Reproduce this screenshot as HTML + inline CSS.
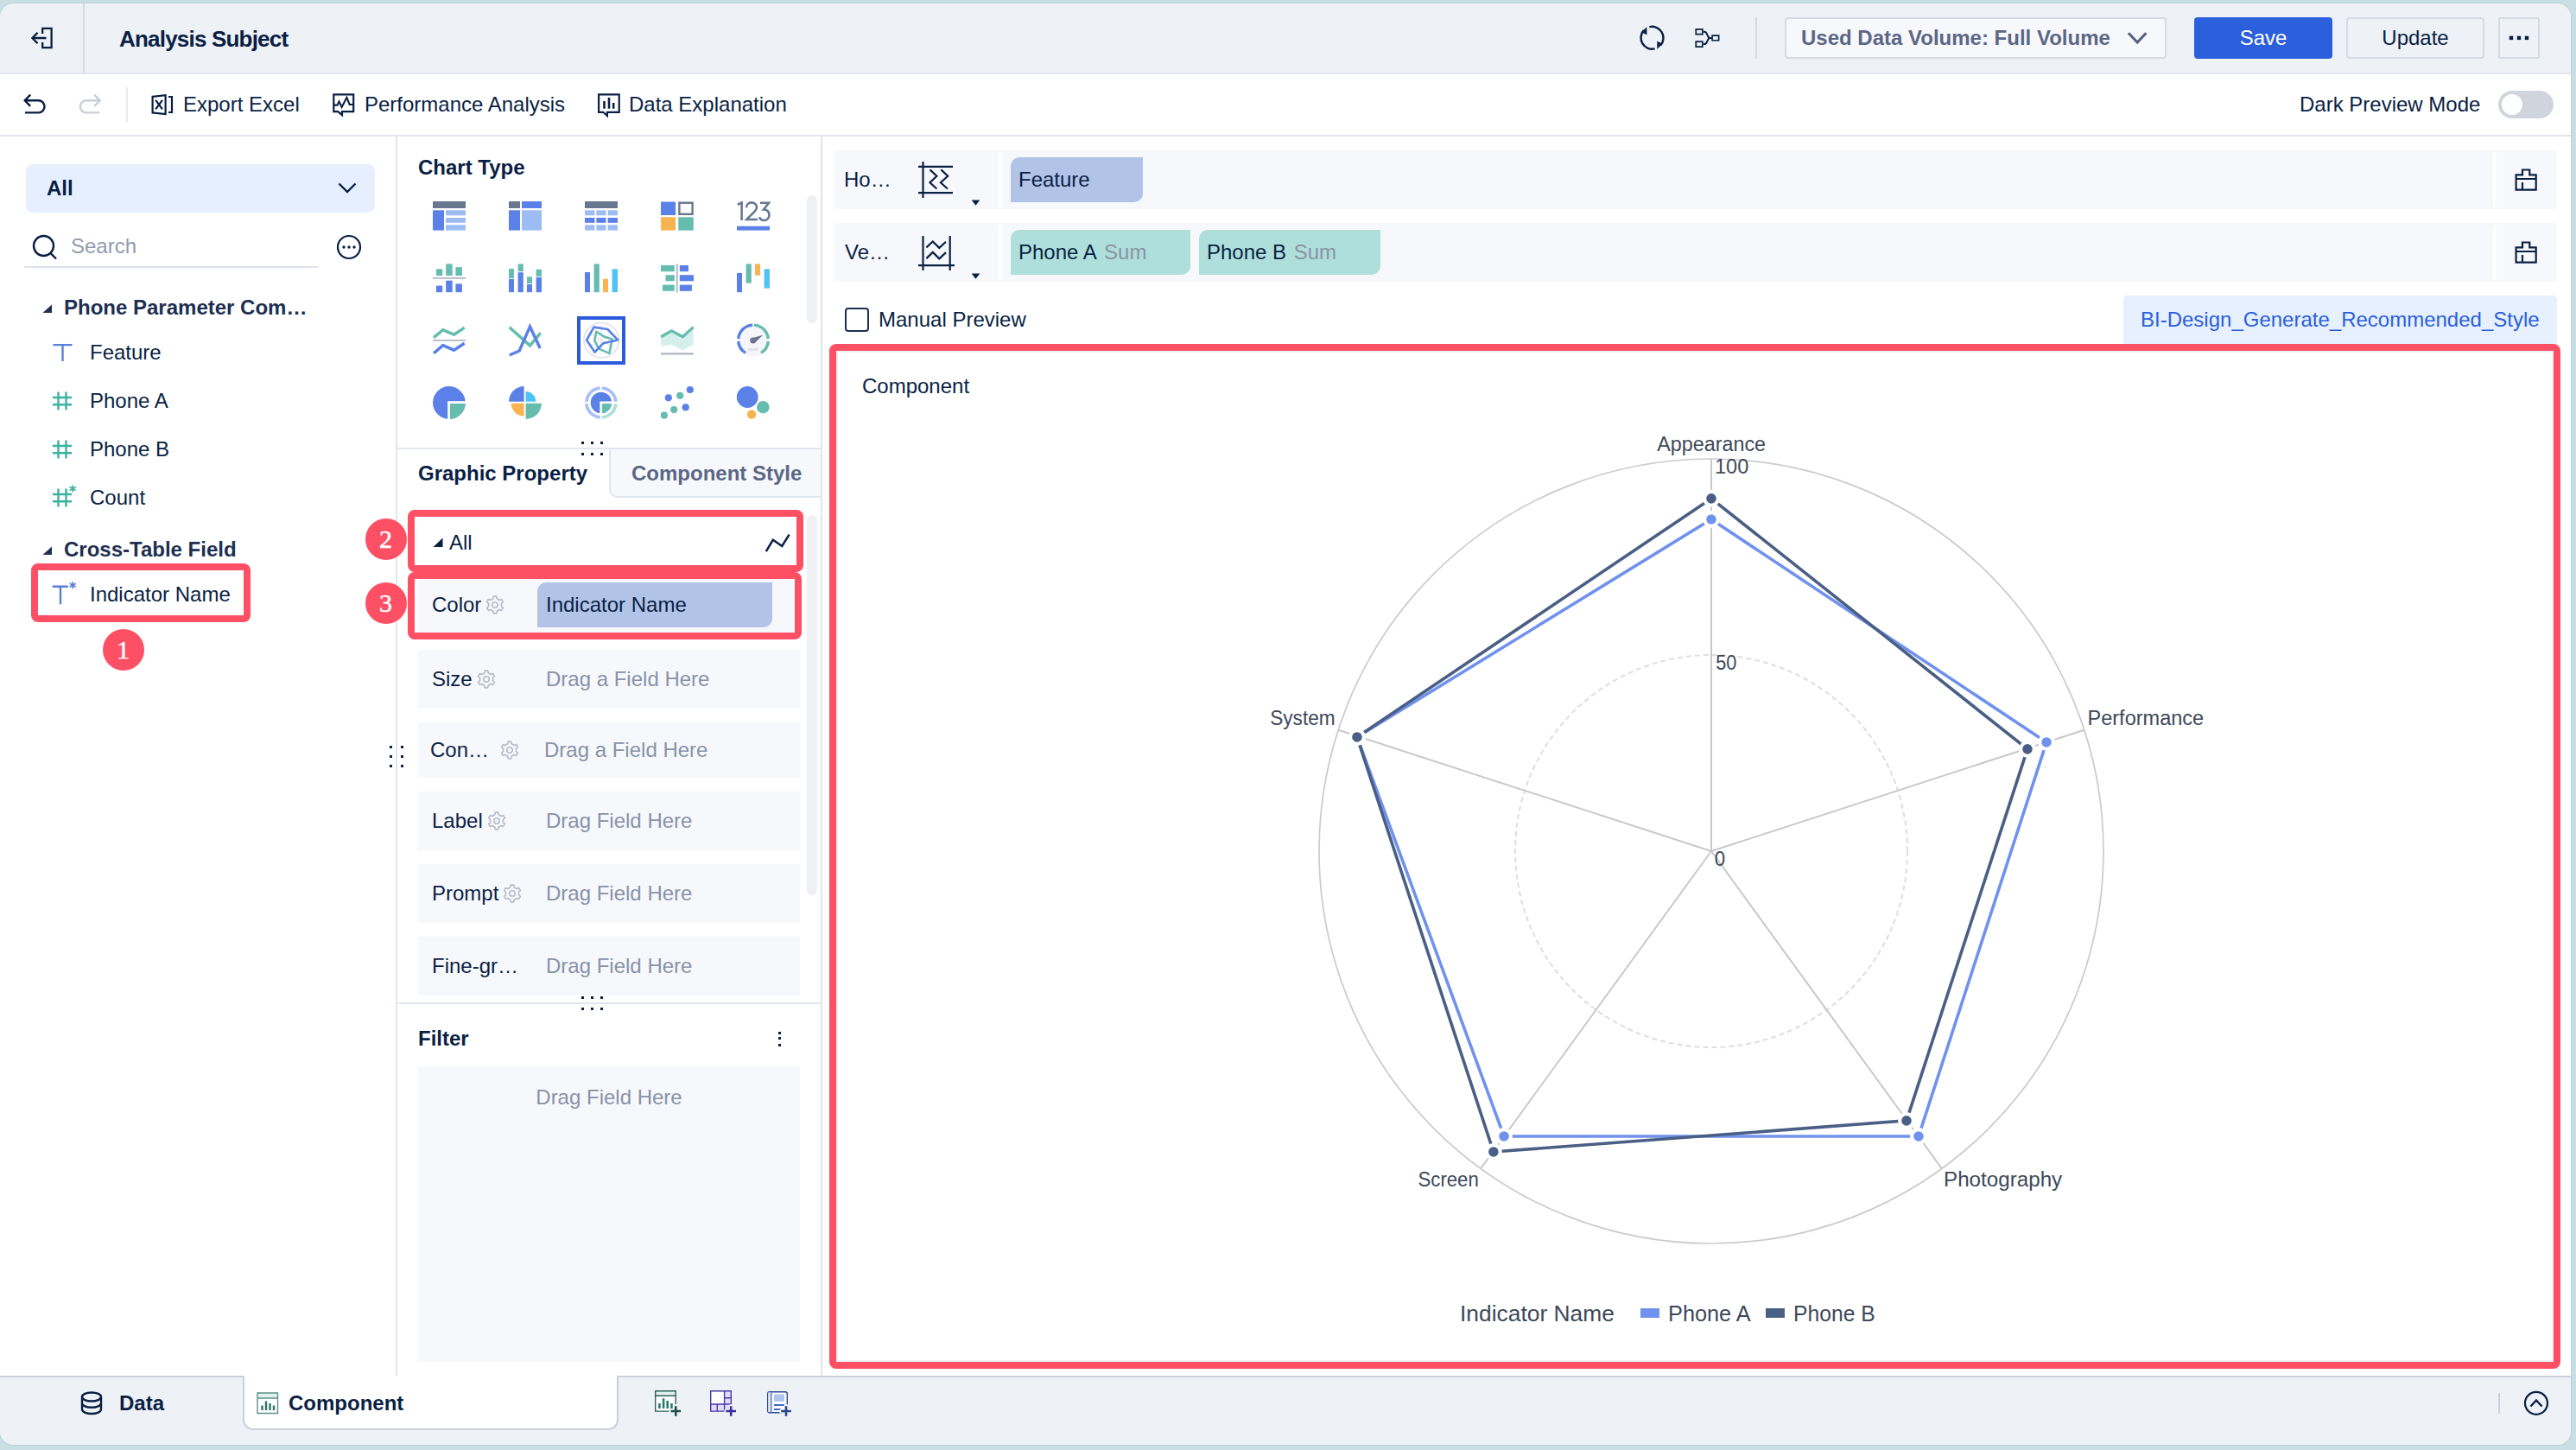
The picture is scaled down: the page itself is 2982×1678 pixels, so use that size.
<!DOCTYPE html>
<html>
<head>
<meta charset="utf-8">
<title>Analysis Subject</title>
<style>
*{box-sizing:border-box;margin:0;padding:0}
html,body{width:2982px;height:1678px;overflow:hidden}
body{background:#c8e0e4;font-family:"Liberation Sans",sans-serif;font-size:24px;color:#0a1f44;position:relative}
.a{position:absolute}
.t{position:absolute;white-space:nowrap;line-height:1}
.b{font-weight:bold}
#win{left:0;top:4px;width:2976px;height:1668px;background:#fff;border-radius:16px;overflow:hidden;box-shadow:0 0 2px 1px #b9d2d7}
#hdr{left:0;top:0;width:2976px;height:80px;background:#eef1f6}
.hl{background:#e1e5ed}
.vl{background:#e1e5ed}
.row{background:#f7f8fc}
.ph{color:#8792a8}
.red{border:8px solid #fe5065;border-radius:8px}
.badge{width:48px;height:48px;border-radius:24px;background:#fe5065;color:#fff;font-family:"Liberation Serif",serif;font-size:30px;line-height:48px;text-align:center;-webkit-text-stroke:0.5px #fff}
.pillb{background:#b1c4e8;border-radius:10px 0 10px 0}
.pillg{background:#aedfdb;border-radius:10px 0 10px 0}
.btn{border:2px solid #d6dae3;border-radius:4px;background:#f7f8fc}
svg{position:absolute;overflow:visible}
</style>
</head>
<body>
<div id="win" class="a">

<!-- ===== header ===== -->
<div id="hdr" class="a"></div>
<div class="a hl" style="left:0;top:80px;width:2976px;height:2px"></div>
<div class="a" style="left:96px;top:0;width:2px;height:80px;background:#d5d9e2"></div>
<div class="t b" style="left:138px;top:28px;font-size:26px;letter-spacing:-0.8px">Analysis Subject</div>

<div class="a" style="left:2032px;top:16px;width:2px;height:48px;background:#d5d9e2"></div>
<div class="a btn" style="left:2066px;top:16px;width:442px;height:48px"></div>
<div class="t b" style="left:2085px;top:28px;color:#5a6785">Used Data Volume: Full Volume</div>
<div class="a" style="left:2540px;top:16px;width:160px;height:48px;background:#2c5fdb;border-radius:4px"></div>
<div class="t" style="left:2540px;width:160px;text-align:center;top:28px;color:#fff">Save</div>
<div class="a btn" style="left:2716px;top:16px;width:160px;height:48px;background:#eef1f6"></div>
<div class="t" style="left:2716px;width:160px;text-align:center;top:28px">Update</div>
<div class="a btn" style="left:2892px;top:16px;width:48px;height:48px;background:#eef1f6;border-radius:2px"></div>

<!-- ===== toolbar ===== -->
<div class="a hl" style="left:0;top:152px;width:2976px;height:2px"></div>
<div class="a" style="left:146px;top:97px;width:2px;height:40px;background:#e6e9f0"></div>
<div class="t" style="left:212px;top:105px">Export Excel</div>
<div class="t" style="left:422px;top:105px">Performance Analysis</div>
<div class="t" style="left:728px;top:105px">Data Explanation</div>
<div class="t" style="left:2662px;top:105px">Dark Preview Mode</div>
<div class="a" style="left:2892px;top:101px;width:64px;height:32px;border-radius:16px;background:#d0d4dd"></div>
<div class="a" style="left:2896px;top:105px;width:24px;height:24px;border-radius:12px;background:#fff"></div>

<!-- ===== panel dividers ===== -->
<div class="a vl" style="left:458px;top:154px;width:2px;height:1434px"></div>
<div class="a vl" style="left:950px;top:154px;width:2px;height:1434px"></div>


<!-- ===== LEFT PANEL ===== -->
<div class="a" style="left:30px;top:186px;width:404px;height:56px;background:#e6efff;border-radius:8px"></div>
<div class="t b" style="left:54px;top:202px">All</div>
<svg style="left:390px;top:205.4px" width="24" height="16" viewBox="0 0 24 16"><path d="M2.5 3.5 L12 13 L21.5 3.5" fill="none" stroke="#0a1f44" stroke-width="2.4"/></svg>
<svg style="left:34px;top:264.6px" width="36" height="36" viewBox="0 0 36 36"><circle cx="16.5" cy="15.5" r="11.5" fill="none" stroke="#0a1f44" stroke-width="2.4"/><path d="M24.5 24 L31 30.5" stroke="#0a1f44" stroke-width="2.4"/></svg>
<div class="t" style="left:82px;top:269px;color:#919cb0">Search</div>
<div class="a" style="left:28px;top:304px;width:340px;height:2px;background:#dde1ea"></div>
<svg style="left:388px;top:266px" width="32" height="32" viewBox="0 0 32 32"><circle cx="16" cy="16" r="13" fill="none" stroke="#0a1f44" stroke-width="2.2"/><circle cx="10" cy="16" r="1.7" fill="#0a1f44"/><circle cx="16" cy="16" r="1.7" fill="#0a1f44"/><circle cx="22" cy="16" r="1.7" fill="#0a1f44"/></svg>

<svg style="left:49px;top:348px" width="12" height="10" viewBox="0 0 12 10"><path d="M0.5 10 L11 10 L11 0.5 Z" fill="#1d2f52"/></svg>
<div class="t b" style="left:74px;top:340px;color:#1d2f52">Phone Parameter Com…</div>

<svg style="left:60px;top:392px" width="26" height="24" viewBox="0 0 26 24"><path d="M1.5 3.1 H23.5 M12.5 3.1 V22" fill="none" stroke="#5a7fd6" stroke-width="2.4"/></svg>
<div class="t" style="left:104px;top:392px">Feature</div>
<svg style="left:60px;top:448px" width="26" height="24" viewBox="0 0 26 24"><path d="M1 8 H23 M1 16.2 H23 M7.5 1.5 V22.5 M16.5 1.5 V22.5" fill="none" stroke="#3bb3a0" stroke-width="2.4"/></svg>
<div class="t" style="left:104px;top:448px">Phone A</div>
<svg style="left:60px;top:504px" width="26" height="24" viewBox="0 0 26 24"><path d="M1 8 H23 M1 16.2 H23 M7.5 1.5 V22.5 M16.5 1.5 V22.5" fill="none" stroke="#3bb3a0" stroke-width="2.4"/></svg>
<div class="t" style="left:104px;top:504px">Phone B</div>
<svg style="left:60px;top:560px" width="30" height="28" viewBox="0 0 30 28"><path d="M1 8 H23 M1 16.2 H23 M7.5 1.5 V22.5 M16.5 1.5 V22.5" fill="none" stroke="#3bb3a0" stroke-width="2.4"/><circle cx="24.2" cy="1.5" r="5.6" fill="#fff"/><path d="M24.2 -2.5 V5.5 M20.7 -0.5 L27.7 3.5 M27.7 -0.5 L20.7 3.5" stroke="#3bb3a0" stroke-width="1.7"/></svg>
<div class="t" style="left:104px;top:560px">Count</div>

<svg style="left:49px;top:628px" width="12" height="10" viewBox="0 0 12 10"><path d="M0.5 10 L11 10 L11 0.5 Z" fill="#1d2f52"/></svg>
<div class="t b" style="left:74px;top:620px;color:#1d2f52">Cross-Table Field</div>
<svg style="left:60px;top:668px" width="30" height="28" viewBox="0 0 30 28"><path d="M0.8 6.7 H18.8 M10 6.7 V27.2" fill="none" stroke="#5a7fd6" stroke-width="2.4"/><path d="M24.2 1.3 V9.3 M20.7 3.3 L27.7 7.3 M27.7 3.3 L20.7 7.3" stroke="#5a7fd6" stroke-width="1.7"/></svg>
<div class="t" style="left:104px;top:672px">Indicator Name</div>
<div class="a red" style="left:36px;top:648px;width:254px;height:68px"></div>
<div class="a badge" style="left:118.5px;top:724.3px">1</div>


<!-- ===== MIDDLE PANEL ===== -->
<div class="t b" style="left:484px;top:178px">Chart Type</div>
<svg style="left:501px;top:227px" width="38" height="38" viewBox="0 0 38 38"><rect x="0.0" y="2.0" width="38.0" height="8.0" fill="#68768f"/><rect x="0.0" y="12.3" width="13.0" height="23.3" fill="#5b81e8"/><rect x="15.0" y="12.3" width="23.0" height="6.0" fill="#9dbcf4"/><rect x="15.0" y="21.0" width="23.0" height="5.8" fill="#9dbcf4"/><rect x="15.0" y="29.3" width="23.0" height="6.3" fill="#9dbcf4"/></svg>
<svg style="left:589px;top:227px" width="38" height="38" viewBox="0 0 38 38"><rect x="0.0" y="2.0" width="13.0" height="8.0" fill="#68768f"/><rect x="15.0" y="2.0" width="23.0" height="8.0" fill="#5b81e8"/><rect x="0.0" y="12.3" width="13.0" height="23.3" fill="#5b81e8"/><rect x="15.0" y="12.3" width="23.0" height="23.3" fill="#9dbcf4"/></svg>
<svg style="left:677px;top:227px" width="38" height="38" viewBox="0 0 38 38"><rect x="0.0" y="2.0" width="38.0" height="8.0" fill="#68768f"/><rect x="0.0" y="12.3" width="11.4" height="6.0" fill="#9dbcf4"/><rect x="0.0" y="21.0" width="11.4" height="5.8" fill="#5b81e8"/><rect x="0.0" y="29.3" width="11.4" height="6.3" fill="#9dbcf4"/><rect x="13.4" y="12.3" width="11.1" height="6.0" fill="#9dbcf4"/><rect x="13.4" y="21.0" width="11.1" height="5.8" fill="#5b81e8"/><rect x="13.4" y="29.3" width="11.1" height="6.3" fill="#9dbcf4"/><rect x="26.6" y="12.3" width="11.4" height="6.0" fill="#9dbcf4"/><rect x="26.6" y="21.0" width="11.4" height="5.8" fill="#5b81e8"/><rect x="26.6" y="29.3" width="11.4" height="6.3" fill="#9dbcf4"/></svg>
<svg style="left:765px;top:227px" width="38" height="38" viewBox="0 0 38 38"><rect x="0.0" y="2.5" width="17.1" height="15.5" fill="#5b81e8"/><rect x="21.4" y="3.7" width="15.2" height="13.1" fill="#fff" stroke="#68768f" stroke-width="2.4"/><rect x="0.0" y="20.3" width="17.1" height="15.3" fill="#f9b350"/><rect x="20.2" y="20.3" width="17.6" height="15.3" fill="#65bdb0"/></svg>
<svg style="left:853px;top:227px" width="38" height="38" viewBox="0 0 38 38"><g fill="none" stroke="#68768f" stroke-width="2.6" stroke-linejoin="miter"><path d="M0.8 5.8 L5.6 3.6 V24"/><path d="M11 9.2 C11 1.5 23 1.5 23 9 C23 13.5 16 17.5 11.2 23 H24"/><path d="M27 3.8 H37 L31 11.5 C39.5 11 39.5 24 31.5 24 C28.5 24 26.7 22.3 26 20.3"/></g><rect x="0.0" y="30.7" width="38.0" height="4.9" fill="#5b81e8"/></svg>
<svg style="left:501px;top:299px" width="38" height="38" viewBox="0 0 38 38"><rect x="4.0" y="8.3" width="7.2" height="7.7" fill="#65bdb0"/><rect x="15.2" y="2.4" width="7.5" height="13.6" fill="#65bdb0"/><rect x="26.4" y="6.2" width="7.5" height="9.8" fill="#65bdb0"/><rect x="0.0" y="18.1" width="38.0" height="1.6" fill="#a9b1c4"/><rect x="4.0" y="27.6" width="7.2" height="7.6" fill="#5b81e8"/><rect x="15.2" y="21.7" width="7.5" height="13.5" fill="#5b81e8"/><rect x="26.4" y="25.4" width="7.5" height="9.8" fill="#5b81e8"/></svg>
<svg style="left:589px;top:299px" width="38" height="38" viewBox="0 0 38 38"><rect x="0.0" y="8.0" width="6.0" height="11.2" fill="#65bdb0"/><rect x="0.0" y="20.0" width="6.0" height="15.2" fill="#5b81e8"/><rect x="10.6" y="2.4" width="6.2" height="8.8" fill="#65bdb0"/><rect x="10.6" y="12.2" width="6.2" height="23.0" fill="#5b81e8"/><rect x="21.0" y="17.3" width="6.0" height="7.7" fill="#65bdb0"/><rect x="21.0" y="26.0" width="6.0" height="9.2" fill="#5b81e8"/><rect x="31.6" y="8.8" width="6.4" height="8.0" fill="#65bdb0"/><rect x="31.6" y="17.8" width="6.4" height="17.4" fill="#5b81e8"/></svg>
<svg style="left:677px;top:299px" width="38" height="38" viewBox="0 0 38 38"><rect x="0.0" y="12.0" width="6.0" height="23.2" fill="#5b81e8"/><rect x="10.6" y="2.4" width="6.2" height="32.8" fill="#65bdb0"/><rect x="21.0" y="19.7" width="6.0" height="15.5" fill="#f9b350"/><rect x="31.6" y="8.3" width="6.4" height="26.9" fill="#4fc3f7"/></svg>
<svg style="left:765px;top:299px" width="38" height="38" viewBox="0 0 38 38"><rect x="17.9" y="2.4" width="1.7" height="33.2" fill="#a9b1c4"/><rect x="0.0" y="4.0" width="15.8" height="7.2" fill="#65bdb0"/><rect x="5.5" y="15.2" width="10.3" height="7.1" fill="#65bdb0"/><rect x="2.0" y="26.6" width="13.8" height="7.2" fill="#65bdb0"/><rect x="21.8" y="4.0" width="10.2" height="7.2" fill="#5b81e8"/><rect x="21.8" y="15.2" width="16.2" height="7.1" fill="#5b81e8"/><rect x="21.8" y="26.6" width="14.1" height="7.2" fill="#5b81e8"/></svg>
<svg style="left:853px;top:299px" width="38" height="38" viewBox="0 0 38 38"><rect x="0.0" y="12.9" width="6.0" height="22.3" fill="#5b81e8"/><rect x="10.6" y="2.4" width="6.2" height="22.2" fill="#65bdb0"/><rect x="21.0" y="2.4" width="6.0" height="13.3" fill="#f9b350"/><rect x="31.6" y="8.3" width="6.4" height="22.4" fill="#4fc3f7"/></svg>
<svg style="left:501px;top:371px" width="38" height="38" viewBox="0 0 38 38"><path d="M1.1 15.7 L11.7 6.7 L24.5 12.2 L36.7 4.1" fill="none" stroke="#65bdb0" stroke-width="3.5" /><rect x="0.0" y="18.1" width="38.0" height="1.6" fill="#a9b1c4"/><path d="M1.1 33.9 L11.7 24.6 L24.5 30.2 L36.7 22.2" fill="none" stroke="#5b81e8" stroke-width="3.5" /></svg>
<svg style="left:589px;top:371px" width="38" height="38" viewBox="0 0 38 38"><path d="M0.7 3.7 L24.5 24.9 L36.7 10.3" fill="none" stroke="#65bdb0" stroke-width="3.5" /><path d="M0.8 36.0 L12.2 31.0 L24.5 2.9 L36.2 27.9" fill="none" stroke="#5b81e8" stroke-width="3.5" /></svg>
<svg style="left:677px;top:371px" width="38" height="38" viewBox="0 0 38 38"><circle cx="19.2" cy="18.8" r="20.2" fill="none" stroke="#dde0e7" stroke-width="1.5"/><path d="M19.2 18.8 L19.2 2 M19.2 18.8 L33 10.5 M19.2 18.8 L33 27 M19.2 18.8 L19.2 35.5 M19.2 18.8 L5 27 M19.2 18.8 L5 10.5" stroke="#e6e8ed" stroke-width="1.1"/><path d="M13.3 8.8 L22.2 14.4 L32.0 17.8 L30.6 22.3 L28.5 33.9 L16.1 28.6 L11.3 19.0 Z" fill="none" stroke="#65bdb0" stroke-width="2.6" stroke-linejoin="round"/><path d="M2.1 18.5 L10.5 3.6 L26.4 6.0 L38.2 18.4 L21.2 22.3 L11.5 32.5 Z" fill="none" stroke="#5b81e8" stroke-width="2.6" stroke-linejoin="round"/></svg>
<svg style="left:765px;top:371px" width="38" height="38" viewBox="0 0 38 38"><path d="M0.1 14.8 L12.4 7.8 L25.3 14.8 L37.6 3.6 L37.6 23.7 L25.3 30.2 L12.4 24.1 L0.1 25.5 Z" fill="#d5f0ea"/><path d="M0.1 14.8 L12.4 7.8 L25.3 14.8 L37.6 3.6" fill="none" stroke="#65bdb0" stroke-width="3.3" stroke-linejoin="miter"/><rect x="0" y="33.4" width="37.6" height="2" fill="#a5acbb"/></svg>
<svg style="left:853px;top:371px" width="38" height="38" viewBox="0 0 38 38"><circle cx="19" cy="18.5" r="19.1" fill="#f5f6f9"/><path d="M10.04 33.41 A17.40 17.40 0 0 1 1.67 20.02" fill="none" stroke="#5b81e8" stroke-width="3.4"/><path d="M1.67 16.98 A17.40 17.40 0 0 1 18.09 1.12" fill="none" stroke="#5b81e8" stroke-width="3.4"/><path d="M19.91 1.12 A17.40 17.40 0 0 1 36.33 16.98" fill="none" stroke="#65bdb0" stroke-width="3.4"/><path d="M36.33 20.02 A17.40 17.40 0 0 1 27.96 33.41" fill="none" stroke="#65bdb0" stroke-width="3.4"/><rect x="13" y="28" width="12" height="2.9" rx="1.45" fill="#dfe3e8"/><circle cx="18.7" cy="19" r="3.5" fill="#68768f"/><path d="M16.6 16.4 L30.2 12.8 L20.8 21.8 Z" fill="#68768f"/></svg>
<svg style="left:501px;top:443px" width="38" height="38" viewBox="0 0 38 38"><circle cx="18.9" cy="19" r="18.9" fill="#5b81e8"/><path d="M18.9 37.9 V19 H37.8" fill="none" stroke="#fff" stroke-width="3.4"/><path d="M20 20.1 H37.8 A18.9 18.9 0 0 1 20 37.9 Z" fill="#65bdb0"/></svg>
<svg style="left:589px;top:443px" width="38" height="38" viewBox="0 0 38 38"><path d="M17.6 17.7 V0.1 A17.6 17.6 0 0 0 0 17.7 Z" fill="#5b81e8"/><path d="M19.6 17.7 V6 A11.7 11.7 0 0 1 31.3 17.7 Z" fill="#4fc3f7"/><path d="M19.6 19.7 H37.9 A18.3 18.3 0 0 1 19.6 38 Z" fill="#65bdb0"/><path d="M17.6 19.7 V34.5 A14.8 14.8 0 0 1 2.8 19.7 Z" fill="#f9b350"/></svg>
<svg style="left:677px;top:443px" width="38" height="38" viewBox="0 0 38 38"><path d="M20.09 2.04 A17.00 17.00 0 0 1 35.86 17.81" fill="none" stroke="#a9bff5" stroke-width="3.8"/><path d="M35.86 20.19 A17.00 17.00 0 0 1 20.09 35.96" fill="none" stroke="#b0e0d8" stroke-width="3.8"/><path d="M17.71 35.96 A17.00 17.00 0 0 1 1.94 20.19" fill="none" stroke="#a9bff5" stroke-width="3.8"/><path d="M1.94 17.81 A17.00 17.00 0 0 1 17.71 2.04" fill="none" stroke="#a9bff5" stroke-width="3.8"/><circle cx="18.9" cy="19" r="12.2" fill="#5b81e8"/><path d="M18.9 31.5 V19 H31.5" fill="none" stroke="#fff" stroke-width="3"/><path d="M20 20.1 H31.1 A12.2 12.2 0 0 1 20 31.2 Z" fill="#65bdb0"/></svg>
<svg style="left:765px;top:443px" width="38" height="38" viewBox="0 0 38 38"><circle cx="33.8" cy="4.0" r="4.1" fill="#5b81e8"/><circle cx="8.8" cy="13.3" r="4.1" fill="#5b81e8"/><circle cx="22.2" cy="10.8" r="4.1" fill="#65bdb0"/><circle cx="28.7" cy="24.4" r="4.1" fill="#5b81e8"/><circle cx="15.2" cy="27.1" r="4.1" fill="#65bdb0"/><circle cx="3.9" cy="33.7" r="4.1" fill="#65bdb0"/></svg>
<svg style="left:853px;top:443px" width="38" height="38" viewBox="0 0 38 38"><circle cx="12.2" cy="12.5" r="12.4" fill="#5b81e8"/><circle cx="30.3" cy="24.2" r="7.3" fill="#65bdb0"/><circle cx="17.1" cy="32.5" r="5.2" fill="#f9b350"/></svg>
<div class="a" style="left:668px;top:362px;width:56px;height:56px;border:4px solid #2b5adb"></div>
<div class="a" style="left:934px;top:222px;width:12px;height:148px;border-radius:6px;background:#eff0f4"></div>

<div class="a hl" style="left:460px;top:514px;width:490px;height:2px"></div>

<div class="a" style="left:705px;top:516px;width:245px;height:56px;background:#f7f8fc;border-left:2px solid #e1e5ed;border-bottom:2px solid #e1e5ed;border-bottom-left-radius:10px"></div>
<div class="t b" style="left:484px;top:532px">Graphic Property</div>
<div class="t b" style="left:731px;top:532px;color:#5a6785">Component Style</div>
<div class="a" style="left:934px;top:592px;width:12px;height:440px;border-radius:6px;background:#eff0f4"></div>
<svg style="left:501px;top:618px" width="12" height="11" viewBox="0 0 12 11"><path d="M0.5 11 L11.5 11 L11.5 0.5 Z" fill="#0a1f44"/></svg>
<div class="t" style="left:520px;top:612px">All</div>
<svg style="left:884px;top:612px" width="32" height="26" viewBox="0 0 32 26"><path d="M2.8 22.2 L10.8 8.8 L21.3 16 L29.6 2.7" fill="none" stroke="#0a1f44" stroke-width="2.5"/></svg>
<div class="a row" style="left:484px;top:664px;width:442px;height:68px"></div>
<div class="t" style="left:500px;top:684px">Color</div>
<svg style="left:561px;top:684px" width="24" height="24" viewBox="0 0 24 24"><path d="M9.78 4.73 L10.26 2.15 L13.74 2.15 L14.22 4.73 L17.18 6.44 L19.66 5.57 L21.40 8.58 L19.41 10.29 L19.41 13.71 L21.40 15.42 L19.66 18.43 L17.18 17.56 L14.22 19.27 L13.74 21.85 L10.26 21.85 L9.78 19.27 L6.82 17.56 L4.34 18.43 L2.60 15.42 L4.59 13.71 L4.59 10.29 L2.60 8.58 L4.34 5.57 L6.82 6.44 Z" fill="none" stroke="#b4bcc9" stroke-width="1.6" stroke-linejoin="round"/><circle cx="12" cy="12" r="3.2" fill="none" stroke="#b4bcc9" stroke-width="1.6"/></svg>
<div class="a pillb" style="left:622px;top:670px;width:272px;height:52px"></div>
<div class="t" style="left:632px;top:684px">Indicator Name</div>
<div class="a row" style="left:484px;top:748px;width:442px;height:68px"></div>
<div class="t" style="left:500px;top:770px">Size</div>
<svg style="left:551px;top:770px" width="24" height="24" viewBox="0 0 24 24"><path d="M9.78 4.73 L10.26 2.15 L13.74 2.15 L14.22 4.73 L17.18 6.44 L19.66 5.57 L21.40 8.58 L19.41 10.29 L19.41 13.71 L21.40 15.42 L19.66 18.43 L17.18 17.56 L14.22 19.27 L13.74 21.85 L10.26 21.85 L9.78 19.27 L6.82 17.56 L4.34 18.43 L2.60 15.42 L4.59 13.71 L4.59 10.29 L2.60 8.58 L4.34 5.57 L6.82 6.44 Z" fill="none" stroke="#b4bcc9" stroke-width="1.6" stroke-linejoin="round"/><circle cx="12" cy="12" r="3.2" fill="none" stroke="#b4bcc9" stroke-width="1.6"/></svg>
<div class="t ph" style="left:632px;top:770px">Drag a Field Here</div>
<div class="a row" style="left:484px;top:832px;width:442px;height:64px"></div>
<div class="t" style="left:498px;top:852px">Con…</div>
<svg style="left:578px;top:852px" width="24" height="24" viewBox="0 0 24 24"><path d="M9.78 4.73 L10.26 2.15 L13.74 2.15 L14.22 4.73 L17.18 6.44 L19.66 5.57 L21.40 8.58 L19.41 10.29 L19.41 13.71 L21.40 15.42 L19.66 18.43 L17.18 17.56 L14.22 19.27 L13.74 21.85 L10.26 21.85 L9.78 19.27 L6.82 17.56 L4.34 18.43 L2.60 15.42 L4.59 13.71 L4.59 10.29 L2.60 8.58 L4.34 5.57 L6.82 6.44 Z" fill="none" stroke="#b4bcc9" stroke-width="1.6" stroke-linejoin="round"/><circle cx="12" cy="12" r="3.2" fill="none" stroke="#b4bcc9" stroke-width="1.6"/></svg>
<div class="t ph" style="left:630px;top:852px">Drag a Field Here</div>
<div class="a row" style="left:484px;top:912px;width:442px;height:68px"></div>
<div class="t" style="left:500px;top:934px">Label</div>
<svg style="left:563px;top:934px" width="24" height="24" viewBox="0 0 24 24"><path d="M9.78 4.73 L10.26 2.15 L13.74 2.15 L14.22 4.73 L17.18 6.44 L19.66 5.57 L21.40 8.58 L19.41 10.29 L19.41 13.71 L21.40 15.42 L19.66 18.43 L17.18 17.56 L14.22 19.27 L13.74 21.85 L10.26 21.85 L9.78 19.27 L6.82 17.56 L4.34 18.43 L2.60 15.42 L4.59 13.71 L4.59 10.29 L2.60 8.58 L4.34 5.57 L6.82 6.44 Z" fill="none" stroke="#b4bcc9" stroke-width="1.6" stroke-linejoin="round"/><circle cx="12" cy="12" r="3.2" fill="none" stroke="#b4bcc9" stroke-width="1.6"/></svg>
<div class="t ph" style="left:632px;top:934px">Drag Field Here</div>
<div class="a row" style="left:484px;top:996px;width:442px;height:68px"></div>
<div class="t" style="left:500px;top:1018px">Prompt</div>
<svg style="left:581px;top:1018px" width="24" height="24" viewBox="0 0 24 24"><path d="M9.78 4.73 L10.26 2.15 L13.74 2.15 L14.22 4.73 L17.18 6.44 L19.66 5.57 L21.40 8.58 L19.41 10.29 L19.41 13.71 L21.40 15.42 L19.66 18.43 L17.18 17.56 L14.22 19.27 L13.74 21.85 L10.26 21.85 L9.78 19.27 L6.82 17.56 L4.34 18.43 L2.60 15.42 L4.59 13.71 L4.59 10.29 L2.60 8.58 L4.34 5.57 L6.82 6.44 Z" fill="none" stroke="#b4bcc9" stroke-width="1.6" stroke-linejoin="round"/><circle cx="12" cy="12" r="3.2" fill="none" stroke="#b4bcc9" stroke-width="1.6"/></svg>
<div class="t ph" style="left:632px;top:1018px">Drag Field Here</div>
<div class="a row" style="left:484px;top:1080px;width:442px;height:68px"></div>
<div class="t" style="left:500px;top:1102px">Fine-gr…</div>
<div class="t ph" style="left:632px;top:1102px">Drag Field Here</div>
<div class="a" style="left:480px;top:594px;width:442px;height:56px;background:transparent"></div>
<div class="a red" style="left:472px;top:586px;width:458px;height:72px"></div>
<div class="a red" style="left:472px;top:658px;width:456px;height:78px"></div>
<div class="a badge" style="left:422.5px;top:596.3px">2</div>
<div class="a badge" style="left:422.5px;top:670.3px">3</div>

<div class="a hl" style="left:460px;top:1156px;width:490px;height:2px"></div>

<div class="a" style="left:672.5px;top:507.0px;width:3px;height:3px;background:#0a1f44"></div><div class="a" style="left:683.5px;top:507.0px;width:3px;height:3px;background:#0a1f44"></div><div class="a" style="left:694.5px;top:507.0px;width:3px;height:3px;background:#0a1f44"></div><div class="a" style="left:672.5px;top:520.0px;width:3px;height:3px;background:#0a1f44"></div><div class="a" style="left:683.5px;top:520.0px;width:3px;height:3px;background:#0a1f44"></div><div class="a" style="left:694.5px;top:520.0px;width:3px;height:3px;background:#0a1f44"></div><div class="a" style="left:672.5px;top:1149.0px;width:3px;height:3px;background:#0a1f44"></div><div class="a" style="left:683.5px;top:1149.0px;width:3px;height:3px;background:#0a1f44"></div><div class="a" style="left:694.5px;top:1149.0px;width:3px;height:3px;background:#0a1f44"></div><div class="a" style="left:672.5px;top:1162.0px;width:3px;height:3px;background:#0a1f44"></div><div class="a" style="left:683.5px;top:1162.0px;width:3px;height:3px;background:#0a1f44"></div><div class="a" style="left:694.5px;top:1162.0px;width:3px;height:3px;background:#0a1f44"></div><div class="a" style="left:451.0px;top:858.5px;width:3px;height:3px;background:#0a1f44"></div><div class="a" style="left:464.0px;top:858.5px;width:3px;height:3px;background:#0a1f44"></div><div class="a" style="left:451.0px;top:869.5px;width:3px;height:3px;background:#0a1f44"></div><div class="a" style="left:464.0px;top:869.5px;width:3px;height:3px;background:#0a1f44"></div><div class="a" style="left:451.0px;top:880.5px;width:3px;height:3px;background:#0a1f44"></div><div class="a" style="left:464.0px;top:880.5px;width:3px;height:3px;background:#0a1f44"></div>
<div class="t b" style="left:484px;top:1186px">Filter</div>
<div class="a" style="left:901px;top:1190px;width:3px;height:3px;background:#0a1f44"></div><div class="a" style="left:901px;top:1196px;width:3px;height:3px;background:#0a1f44"></div><div class="a" style="left:901px;top:1204px;width:3px;height:3px;background:#0a1f44"></div>
<div class="a row" style="left:484px;top:1230px;width:442px;height:342px"></div>
<div class="t ph" style="left:484px;width:442px;text-align:center;top:1254px">Drag Field Here</div>


<!-- ===== RIGHT AREA ===== -->
<div class="a row" style="left:966px;top:170px;width:1994px;height:68px"></div>
<div class="a" style="left:1156px;top:172px;width:4px;height:64px;background:#fff"></div>
<div class="a" style="left:2886px;top:172px;width:4px;height:64px;background:#fff"></div>
<div class="t" style="left:977px;top:192px">Ho…</div>
<svg style="left:1124px;top:227px" width="11" height="7" viewBox="0 0 11 7"><path d="M0.7 0.4 H10.3 L5.5 6.8 Z" fill="#0a1f44"/></svg>
<svg style="left:0;top:0" width="2976" height="400" viewBox="0 0 2976 400"><path d="M2912.6 198.3 H2920 V192.5 H2928.3 V198.3 H2935.7 V215.7 H2912.6 Z M2912.6 203.0 H2935.7 M2920 207.0 V215.7" fill="none" stroke="#0a1f44" stroke-width="2.2"/></svg>
<div class="a row" style="left:966px;top:254px;width:1994px;height:68px"></div>
<div class="a" style="left:1156px;top:256px;width:4px;height:64px;background:#fff"></div>
<div class="a" style="left:2886px;top:256px;width:4px;height:64px;background:#fff"></div>
<div class="t" style="left:978px;top:276px">Ve…</div>
<svg style="left:1124px;top:312px" width="11" height="7" viewBox="0 0 11 7"><path d="M0.7 0.4 H10.3 L5.5 6.8 Z" fill="#0a1f44"/></svg>
<svg style="left:0;top:0" width="2976" height="400" viewBox="0 0 2976 400"><path d="M2912.6 282.3 H2920 V276.5 H2928.3 V282.3 H2935.7 V299.7 H2912.6 Z M2912.6 287.0 H2935.7 M2920 291.0 V299.7" fill="none" stroke="#0a1f44" stroke-width="2.2"/></svg>
<svg style="left:0;top:0" width="1200" height="330" viewBox="0 0 1200 330"><path d="M1068.5 183.0 L1068.5 225.0 M1063.0 188.8 L1103.0 188.8 M1063.0 219.2 L1103.0 219.2 M1076.5 192.4 L1084.4 199.8 L1076.5 207.3 L1084.4 214.5 M1089.4 192.4 L1097.2 199.8 L1088.9 207.3 L1096.9 214.5 M1068.5 269.1 L1068.5 308.9 M1099.7 269.1 L1099.7 308.9 M1063.0 303.1 L1105.0 303.1 M1072.4 282.4 L1079.8 275.5 L1087.3 282.9 L1095.0 275.8 M1072.4 295.1 L1079.8 287.9 L1087.3 295.4 L1095.0 288.1" fill="none" stroke="#0a1f44" stroke-width="2.2"/></svg>
<div class="a pillb" style="left:1170px;top:178px;width:153px;height:52px"></div>
<div class="t" style="left:1179px;top:192px">Feature</div>
<div class="a pillg" style="left:1170px;top:262px;width:208px;height:52px"></div>
<div class="t" style="left:1179px;top:276px">Phone A <span style="color:#8a93a6;margin-left:3px">Sum</span></div>
<div class="a pillg" style="left:1388px;top:262px;width:210px;height:52px"></div>
<div class="t" style="left:1397px;top:276px">Phone B <span style="color:#8a93a6;margin-left:2px">Sum</span></div>
<div class="a" style="left:978px;top:352px;width:28px;height:28px;border:2px solid #1d2f52;border-radius:4px;background:#fff"></div>
<div class="t" style="left:1017px;top:354px">Manual Preview</div>
<div class="a" style="left:2458px;top:338px;width:502px;height:59px;background:#e6f0ff;border-radius:4px 4px 0 4px"></div>
<div class="t" style="left:2478px;top:354px;color:#2c5fdb">BI-Design_Generate_Recommended_Style</div>
<div class="a" style="left:968px;top:402px;width:1988px;height:1170px;border:2px solid #edf0f5"></div>
<div class="a red" style="left:960px;top:394px;width:2004px;height:1186px"></div>
<div class="t" style="left:998px;top:431px">Component</div>
<svg style="left:0;top:0" width="2976" height="1668" viewBox="0 0 2976 1668" font-family="Liberation Sans, sans-serif" fill="#3d4959">
<circle cx="1981" cy="981" r="454" fill="none" stroke="#cbcbcb" stroke-width="1.7"/>
<circle cx="1981" cy="981" r="227" fill="none" stroke="#dedede" stroke-width="2" stroke-dasharray="6 4"/>
<path d="M1981 981 L1981.0 527.0 M1981 981 L2412.8 840.7 M1981 981 L2247.9 1348.3 M1981 981 L1714.1 1348.3 M1981 981 L1549.2 840.7" fill="none" stroke="#c9c9c9" stroke-width="2"/>
<polygon points="1981.00,597.00 2369.03,854.96 2220.96,1311.00 1741.04,1310.95 1570.95,848.95" fill="none" stroke="#7092ee" stroke-width="3.6" stroke-linejoin="miter"/>
<polygon points="1981.00,572.90 2346.98,862.90 2206.98,1292.90 1728.88,1328.95 1570.95,848.95" fill="none" stroke="#4a5f85" stroke-width="3.6" stroke-linejoin="miter"/>
<circle cx="1981.00" cy="597.00" r="7.85" fill="#7092ee" stroke="#fff" stroke-width="4.1"/><circle cx="2369.03" cy="854.96" r="7.85" fill="#7092ee" stroke="#fff" stroke-width="4.1"/><circle cx="2220.96" cy="1311.00" r="7.85" fill="#7092ee" stroke="#fff" stroke-width="4.1"/><circle cx="1741.04" cy="1310.95" r="7.85" fill="#7092ee" stroke="#fff" stroke-width="4.1"/><circle cx="1570.95" cy="848.95" r="7.85" fill="#7092ee" stroke="#fff" stroke-width="4.1"/>
<circle cx="1981.00" cy="572.90" r="7.85" fill="#4a5f85" stroke="#fff" stroke-width="4.1"/><circle cx="2346.98" cy="862.90" r="7.85" fill="#4a5f85" stroke="#fff" stroke-width="4.1"/><circle cx="2206.98" cy="1292.90" r="7.85" fill="#4a5f85" stroke="#fff" stroke-width="4.1"/><circle cx="1728.88" cy="1328.95" r="7.85" fill="#4a5f85" stroke="#fff" stroke-width="4.1"/><circle cx="1570.95" cy="848.95" r="7.85" fill="#4a5f85" stroke="#fff" stroke-width="4.1"/>
<text x="1981.2" y="517.6" font-size="23" text-anchor="middle" textLength="125.8" lengthAdjust="spacingAndGlyphs">Appearance</text>
<text x="2416.5" y="834.6" font-size="23" textLength="134.7" lengthAdjust="spacingAndGlyphs">Performance</text>
<text x="2250" y="1368.5" font-size="23" textLength="137.2" lengthAdjust="spacingAndGlyphs">Photography</text>
<text x="1711.8" y="1368.5" font-size="23" text-anchor="end" textLength="70.3" lengthAdjust="spacingAndGlyphs">Screen</text>
<text x="1545.6" y="834.5" font-size="23" text-anchor="end" textLength="75.4" lengthAdjust="spacingAndGlyphs">System</text>
<text x="1985" y="544" font-size="23" textLength="39.3" lengthAdjust="spacingAndGlyphs">100</text>
<text x="1986.2" y="771.2" font-size="23" textLength="24.2" lengthAdjust="spacingAndGlyphs">50</text>
<text x="1984.8" y="997.9" font-size="23" textLength="12.4" lengthAdjust="spacingAndGlyphs">0</text>
<text x="1690" y="1524.6" font-size="26" textLength="178.9" lengthAdjust="spacingAndGlyphs">Indicator Name</text>
<rect x="1899" y="1510" width="22" height="11" fill="#7092ee"/><text x="1931" y="1524.6" font-size="26" textLength="95.7" lengthAdjust="spacingAndGlyphs">Phone A</text>
<rect x="2044" y="1510" width="22" height="11" fill="#4a5f85"/><text x="2076" y="1524.6" font-size="26" textLength="94.7" lengthAdjust="spacingAndGlyphs">Phone B</text>
</svg>


<!-- ===== BOTTOM BAR ===== -->
<div class="a" style="left:0;top:1588px;width:2976px;height:80px;background:#eef1f6;border-top:2px solid #cbd0da"></div>
<div class="a" style="left:281px;top:1588px;width:435px;height:63px;background:#fff;border:2px solid #cbd0da;border-top:none;border-radius:0 0 12px 12px"></div>
<svg style="left:93px;top:1606px" width="26" height="28" viewBox="0 0 26 28"><ellipse cx="13" cy="6.5" rx="11" ry="5" fill="none" stroke="#0a1f44" stroke-width="2.4"/><path d="M2 6.5 V21 A11 5 0 0 0 24 21 V6.5 M2 13.8 A11 5 0 0 0 24 13.8" fill="none" stroke="#0a1f44" stroke-width="2.4"/></svg>
<div class="t b" style="left:138px;top:1608px">Data</div>
<svg style="left:296px;top:1606px" width="28" height="28" viewBox="0 0 28 28"><rect x="2" y="2" width="23.5" height="6" fill="#dff2ee"/><path d="M2 2 H25.5 V25.5 H2 Z M2 8 H25.5" fill="none" stroke="#5e9087" stroke-width="1.4"/><path d="M7.5 22 V16.5 M12 22 V11.5 M16.5 22 V14 M21 22 V16.5" stroke="#2f7468" stroke-width="2.4"/></svg>
<div class="t b" style="left:334px;top:1608px">Component</div>
<svg style="left:755px;top:1601px" width="40" height="40" viewBox="0 0 40 40"><rect x="3.70" y="4.70" width="23.50" height="23.40" fill="#fff"/><rect x="3.70" y="4.70" width="23.50" height="5.60" fill="#dff2ee"/><path d="M3.70 4.70 H27.20 V28.10 H3.70 Z M3.70 10.30 H27.20" fill="none" stroke="#2f5f58" stroke-width="1.4"/><path d="M8.4 25.0 V19.1 M13.1 25.0 V13.3 M17.7 25.0 V16.0 M22.4 25.0 V19.1" stroke="#2f7a6e" stroke-width="2.6"/><path d="M22.1 28.0 H32.5 M27.3 22.8 V33.2" stroke="#eef1f6" stroke-width="5.4" stroke-linecap="round"/><path d="M21.5 28.0 H33.1 M27.3 22.2 V33.8" stroke="#1f4f4a" stroke-width="2.6"/></svg>
<svg style="left:755px;top:1601px" width="100" height="40" viewBox="0 0 100 40"><rect x="67.70" y="4.70" width="23.60" height="23.40" fill="#e0dcfa"/><rect x="67.70" y="4.70" width="15.90" height="15.30" fill="#fff"/><path d="M67.70 4.70 H91.30 V28.10 H67.70 Z M83.60 4.70 V28.10 M67.70 20.00 H91.30 M83.60 12.70 H91.30 M75.30 20.00 V28.10" fill="none" stroke="#4a35a8" stroke-width="1.4"/><path d="M86.0 28.0 H96.4 M91.2 22.8 V33.2" stroke="#eef1f6" stroke-width="5.4" stroke-linecap="round"/><path d="M85.4 28.0 H97.0 M91.2 22.2 V33.8" stroke="#3d2a9a" stroke-width="2.6"/></svg>
<svg style="left:755px;top:1601px" width="170" height="40" viewBox="0 0 170 40"><rect x="133.70" y="5.70" width="22.60" height="24.10" rx="2.2" fill="#fff" stroke="#2c4a8f" stroke-width="1.4"/><rect x="134.40" y="6.40" width="3.2" height="22.70" fill="#dbe6fa"/><path d="M137.8 5.7 V29.8" stroke="#5a74ad" stroke-width="1.4"/><rect x="141.0" y="8.6" width="12" height="8.2" fill="#adc4ec"/><path d="M141.0 21.0 H153.0 M141.0 26.0 H149.0" stroke="#3f67c7" stroke-width="2"/><path d="M149.8 28.0 H160.2 M155.0 22.8 V33.2" stroke="#eef1f6" stroke-width="5.4" stroke-linecap="round"/><path d="M149.2 28.0 H160.8 M155.0 22.2 V33.8" stroke="#2a4488" stroke-width="2.6"/></svg>
<div class="a" style="left:2892px;top:1608px;width:2px;height:24px;background:#cbd0da"></div>
<svg style="left:2920px;top:1604px" width="32" height="32" viewBox="0 0 32 32"><circle cx="16" cy="15.8" r="13" fill="none" stroke="#0a1f44" stroke-width="2.2"/><path d="M9.5 19.5 L16 12.5 L22.5 19.5" fill="none" stroke="#0a1f44" stroke-width="2.4"/></svg>

<!-- ===== HEADER ICONS ===== -->
<svg style="left:30px;top:20px" width="40" height="40" viewBox="30 24 40 40"><path d="M49.2 38.9 V32.8 H59.6 V55.2 H49.2 V49 M38.2 44 H53.5 M43.5 37.9 L37.4 44 L43.5 50.1" fill="none" stroke="#0a1f44" stroke-width="2.3"/></svg>
<svg style="left:20px;top:96px" width="40" height="40" viewBox="20 100 40 40"><path d="M35.2 109.6 L28.7 116.3 L35.2 122.9 M28.7 116.3 H44.5 A7.05 7.05 0 0 1 44.5 130.4 H29" fill="none" stroke="#0a1f44" stroke-width="2.4"/></svg>
<svg style="left:84px;top:96px" width="40" height="40" viewBox="84 100 40 40"><path d="M109.2 109.6 L115.7 116.3 L109.2 122.9 M115.7 116.3 H99.9 A7.05 7.05 0 0 0 99.9 130.4 H115.4" fill="none" stroke="#c9ced8" stroke-width="2.4"/></svg>
<svg style="left:170px;top:101px" width="36" height="36" viewBox="170 105 36 36"><path d="M176.6 111.8 L191.6 110.2 V132 L176.6 130.4 Z M180.2 115.8 L188 126.4 M188 115.8 L180.2 126.4 M195 112 H199 V130 H195" fill="none" stroke="#0a1f44" stroke-width="2.2"/></svg>
<svg style="left:380px;top:101px" width="36" height="36" viewBox="380 105 36 36"><path d="M386.3 109.3 H409.2 V129.2 H396 V133.2 L391.2 129.2 H386.3 Z" fill="none" stroke="#0a1f44" stroke-width="2.2"/><path d="M386.3 121.6 H390.6 L392.5 117.4 L395.6 123.9 L401.4 112.9 L404.7 121 H409.2" fill="none" stroke="#0a1f44" stroke-width="2.1"/></svg>
<svg style="left:686px;top:101px" width="36" height="36" viewBox="686 105 36 36"><path d="M693.1 109.3 H716.7 V129.8 H702.9 V134 L698.3 129.8 H693.1 Z" fill="none" stroke="#0a1f44" stroke-width="2.2"/><path d="M699.5 125.7 V117.1 M705 125.7 V113.1 M710.2 125.7 V119.1" fill="none" stroke="#0a1f44" stroke-width="2.6"/></svg>
<svg style="left:0;top:0" width="2976" height="80" viewBox="0 0 2976 80"><path d="M1909.36 27.19 A13.0 13.0 0 0 1 1922.16 48.50 M1915.64 52.41 A13.0 13.0 0 0 1 1902.84 31.10" fill="none" stroke="#0a1f44" stroke-width="2.4"/><path d="M1918.3 43.4 L1918.3 52.7 L1924.7 46.8 Z" fill="#0a1f44"/><path d="M1906.4 27.2 L1906.4 36.6 L1900.0 33.1 Z" fill="#0a1f44"/><path d="M1963.25 29.95 H1970.85 V35.65 H1963.25 Z M1963.25 44.15 H1970.85 V50.05 H1963.25 Z M1982.05 37.05 H1989.65 V42.75 H1982.05 Z" fill="none" stroke="#0a1f44" stroke-width="1.7"/><path d="M1971.8 32.8 H1973 C1977 32.8 1976 39.9 1979.5 39.9 H1981.5 M1971.8 47.1 H1973 C1977 47.1 1976 39.9 1979.5 39.9" fill="none" stroke="#0a1f44" stroke-width="2"/><path d="M2464 34.2 L2474.2 45 L2484.4 34.2" fill="none" stroke="#55627f" stroke-width="3.1"/><rect x="2904.8" y="37.7" width="4.4" height="4.4" fill="#0a1f44"/><rect x="2913.8" y="37.7" width="4.4" height="4.4" fill="#0a1f44"/><rect x="2922.8" y="37.7" width="4.4" height="4.4" fill="#0a1f44"/></svg>


</div>
</body>
</html>
